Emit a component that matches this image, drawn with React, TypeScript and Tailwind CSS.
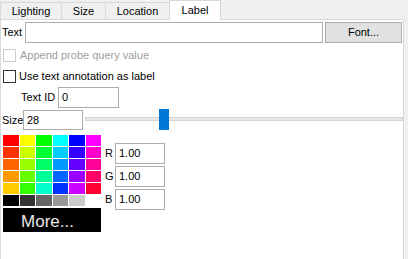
import React from "react";

const rows: string[][] = [
  ["#ff0000", "#ffff00", "#00ff00", "#00ffff", "#0000ff", "#ff00ff"],
  ["#ff3300", "#ccff00", "#00ff33", "#00ccff", "#3300ff", "#ff00cc"],
  ["#ff6600", "#99ff00", "#00ff66", "#0099ff", "#6600ff", "#ff0099"],
  ["#ff9900", "#66ff00", "#00ff99", "#0066ff", "#9900ff", "#ff0066"],
  ["#ffcc00", "#33ff00", "#00ffcc", "#0033ff", "#cc00ff", "#ff0033"],
  ["#000000", "#333333", "#666666", "#999999", "#cccccc", "#ffffff"],
];

export default function App() {
  return (
    <div className="w-[408px] h-[259px] bg-[#f0f0f0] overflow-hidden font-['Liberation_Sans',Arial,sans-serif] text-[11px] leading-none text-black">
      <div className="flex items-end h-[19px]">
        <div className="w-[61px] h-[17px] border-l border-t border-[#d9d9d9] bg-[#f0f0f0] flex items-center justify-center">
          Lighting
        </div>
        <div className="w-[44px] h-[17px] border-l border-t border-[#d9d9d9] bg-[#f0f0f0] flex items-center justify-center">
          Size
        </div>
        <div className="w-[64px] h-[17px] border-l border-t border-[#d9d9d9] bg-[#f0f0f0] flex items-center justify-center">
          Location
        </div>
        <div className="relative z-10 -mb-px w-[52px] h-[20px] border-l border-r border-t border-[#d9d9d9] bg-white flex items-center justify-center">
          Label
        </div>
      </div>
      <div className="w-[404px] h-[240px] border-l border-r border-t border-[#d9d9d9] bg-white flex flex-col">
        <div className="flex items-center mt-[2px] h-[21px]">
          <span className="ml-[1px] w-[23px]">Text</span>
          <div className="w-[298px] h-[21px] border border-[#adadad] bg-white" />
          <div className="ml-[2px] w-[77px] h-[21px] border border-[#adadad] bg-[#e1e1e1] flex items-center justify-center">
            Font...
          </div>
        </div>
        <div className="flex items-center mt-[6px] h-[13px]">
          <div className="ml-[2px] w-[13px] h-[13px] border border-[#cccccc] bg-white" />
          <span className="ml-[4px] text-[#a0a0a0]">Append probe query value</span>
        </div>
        <div className="flex items-center mt-[8px] h-[13px]">
          <div className="ml-[2px] w-[13px] h-[13px] border border-[#333333] bg-white" />
          <span className="ml-[3px]">Use text annotation as label</span>
        </div>
        <div className="flex items-center mt-[4px] h-[21px]">
          <span className="ml-[20px] w-[37px]">Text ID</span>
          <div className="w-[61px] h-[21px] border border-[#adadad] bg-white flex items-center pl-[3px]">
            0
          </div>
        </div>
        <div className="flex items-start mt-[1px] h-[21px]">
          <span className="ml-[1px] w-[21px] mt-[1px] h-[20px] flex items-center">Size</span>
          <div className="mt-[1px] w-[60px] h-[20px] border border-[#adadad] bg-white flex items-center pl-[3px]">
            28
          </div>
          <div className="ml-[2px] w-[318px] h-[21px] relative">
            <div className="absolute left-0 right-0 top-[8px] h-[4px] bg-[#e7e7e7] border border-[#d6d6d6]" />
            <div className="absolute left-[74px] top-0 w-[10px] h-[21px] bg-[#0078d7]" />
          </div>
        </div>
        <div className="flex items-start mt-[5px]">
          <div className="ml-[2px] w-[98px] flex flex-col">
            <div className="grid grid-cols-6 gap-px">
              {rows.flat().map((c, i) => (
                <div key={i} className="h-[11px]" style={{ backgroundColor: c }} />
              ))}
            </div>
            <div className="mt-[2px] h-[24px] bg-black text-[#e8e8e8] text-[17px] flex items-center justify-center pr-[9px] pt-[2px]">
              More...
            </div>
          </div>
          <div className="flex flex-col mt-[8px] gap-[2px]">
            {["R", "G", "B"].map((l) => (
              <div key={l} className="flex items-center h-[21px]">
                <span className="pl-[4px] w-[14px]">{l}</span>
                <div className="w-[50px] h-[21px] border border-[#adadad] bg-white flex items-center pl-[3px]">
                  1.00
                </div>
              </div>
            ))}
          </div>
        </div>
      </div>
    </div>
  );
}
